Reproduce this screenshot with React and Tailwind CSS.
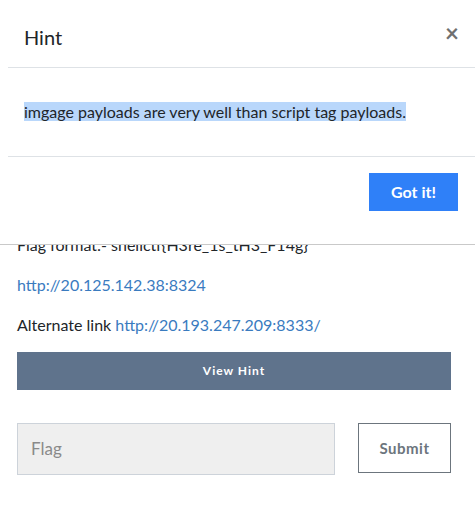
import React from "react";

const Modal = () => (
  <div className="absolute left-0 top-0 w-full h-[245px] bg-white border-b border-[#c9c9c9]">
    <div className="ml-2">
      <div className="h-[68px] flex items-center justify-between pl-4 pr-4 border-b border-[#dee2e6]">
        <h5 className="text-[20px] text-[#212529] leading-none pt-[6px]">Hint</h5>
        <button className="text-[24px] font-bold text-[#707070] leading-none pb-[2px]">×</button>
      </div>
      <div className="h-[89px] pl-4 pt-[32px] border-b border-[#dee2e6]">
        <p className="text-[16px] leading-6 text-[#212529]">
          <span className="bg-[#b9d7fb]">imgage payloads are very well than script tag payloads.</span>
        </p>
      </div>
      <div className="flex justify-end pt-[16px] pr-[17px]">
        <button className="w-[89px] h-[38px] bg-[#2f80f8] text-white font-bold text-[16px]">
          Got it!
        </button>
      </div>
    </div>
  </div>
);

export default function App() {
  return (
    <div
      className="relative w-[475px] h-[514px] bg-white overflow-hidden text-[#212529]"
      style={{ fontFamily: "Lato, 'Open Sans', sans-serif" }}
    >
      <div className="px-[17px] pt-[233px] pr-[24px]">
        <p className="text-[16px] leading-6 mb-4">Flag format:- shellctf{"{"}H3re_1s_tH3_F14g{"}"}</p>
        <p className="text-[16px] leading-6 mb-4">
          <a className="text-[#3a7bbf]">http://20.125.142.38:8324</a>
        </p>
        <p className="text-[16px] leading-6 mb-[15px]">
          Alternate link <a className="text-[#3a7bbf]">http://20.193.247.209:8333/</a>
        </p>
        <button className="w-[434px] h-[38px] bg-[#5f738c] text-white font-bold text-[12px] tracking-[1px]">
          View Hint
        </button>
        <div className="flex justify-between mt-[33px] w-[434px]">
          <div className="w-[318px] h-[52px] bg-[#efefef] border border-[#cdd3da] flex items-center pl-[13px]">
            <span className="text-[17px] text-[#8a8a8a]">Flag</span>
          </div>
          <button className="w-[93px] h-[50px] border border-[#6c757d] bg-white text-[#6c757d] font-bold text-[15px] tracking-[0.5px]">
            Submit
          </button>
        </div>
      </div>
      <Modal />
    </div>
  );
}
